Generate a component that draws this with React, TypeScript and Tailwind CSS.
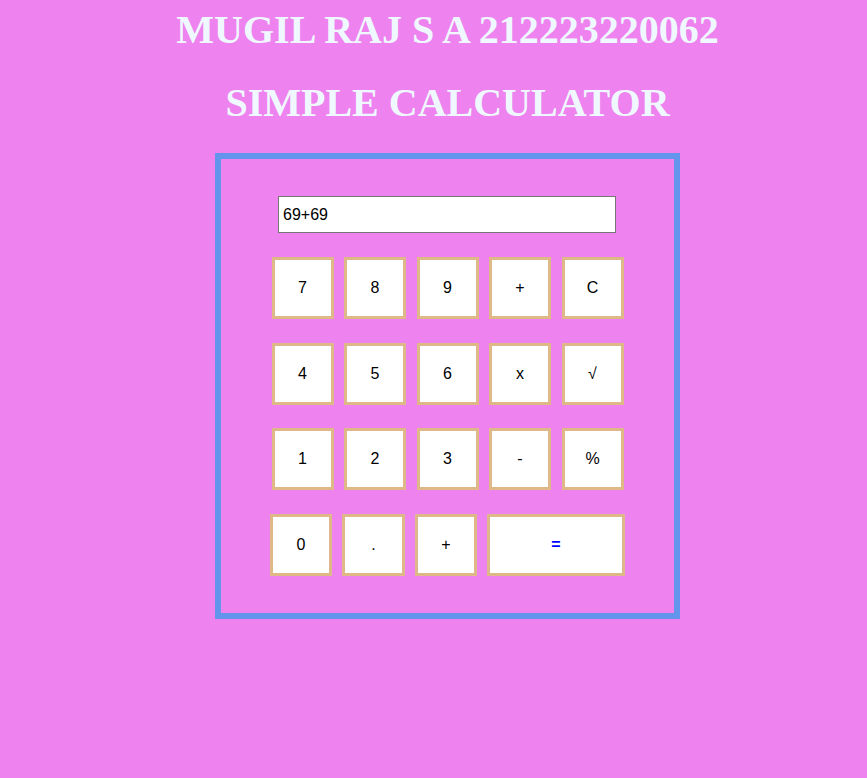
import React, { useState } from "react";

const rows: string[][] = [
  ["7", "8", "9", "+", "C"],
  ["4", "5", "6", "x", "√"],
  ["1", "2", "3", "-", "%"],
];

const lastRow = [
  { label: "0", w: "w-[62px]" },
  { label: ".", w: "w-[63px]" },
  { label: "+", w: "w-[62px]" },
  { label: "=", w: "w-[138px]" },
];

const App: React.FC = () => {
  const [display, setDisplay] = useState("69+69");

  return (
    <div className="min-h-screen w-full bg-[#ee82ee] pl-[28px] pt-[7px] font-['Liberation_Serif',serif]">
      <h1 className="text-center text-[40px] font-bold leading-[46px] text-[#f0f8ff]">
        MUGIL RAJ S A 212223220062
      </h1>
      <h1 className="mt-[27px] text-center text-[40px] font-bold leading-[46px] text-[#f0f8ff]">
        SIMPLE CALCULATOR
      </h1>

      <div className="mx-auto mt-[27px] flex w-[465px] flex-col items-center border-[6px] border-[#6495ed] pt-[37px] pb-[37px]">
        <input
          type="text"
          value={display}
          onChange={(e) => setDisplay(e.target.value)}
          className="mr-[1px] h-[37px] w-[338px] border border-[#767676] bg-white pl-[4px] font-['Liberation_Sans',sans-serif] text-[16px] text-black outline-none"
        />

        <div className="mt-[24px] flex flex-col gap-[23.5px] font-['Liberation_Sans',sans-serif] text-[16px] text-black">
          {rows.map((row, i) => (
            <div key={i} className="grid grid-cols-[repeat(5,62px)] justify-center gap-x-[10.5px]">
              {row.map((key) => (
                <button
                  key={key}
                  className="flex h-[62px] w-[62px] items-center justify-center border-[3px] border-[#deb887] bg-white"
                >
                  {key}
                </button>
              ))}
            </div>
          ))}
          <div className="flex gap-[10px]">
            {lastRow.map((b) => (
              <button
                key={b.label}
                className={`flex h-[62px] items-center justify-center border-[3px] border-[#deb887] bg-white ${b.w} ${
                  b.label === "=" ? "font-bold text-[#0000ff]" : ""
                }`}
              >
                {b.label}
              </button>
            ))}
          </div>
        </div>
      </div>
    </div>
  );
};

export default App;
